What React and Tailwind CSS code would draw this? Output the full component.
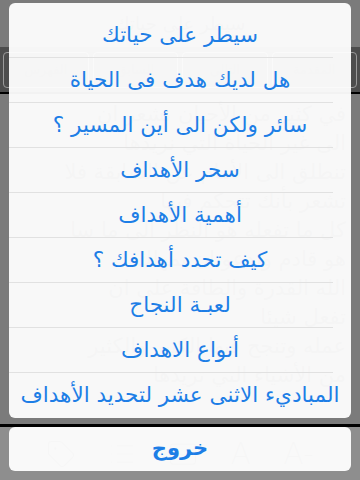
import React from "react";
import { Tag, List, Mail } from "lucide-react";

const items = [
  "سيطر على حياتك",
  "هل لديك هدف فى الحياة",
  "سائر ولكن الى أين المسير ؟",
  "سحر الأهداف",
  "أهمية الأهداف",
  "كيف تحدد أهدافك ؟",
  "لعبـة النجاح",
  "أنواع الاهداف",
  "المباديء الاثنى عشر لتحديد الأهداف",
];

const bodyLines = [
  "في كثير من الأحيان نشعر ان",
  "الى غير الحياة التي نريدها",
  "تنطلق الى الأمام عن السابقة فلا",
  "تشعر بأنك تتحكم فيها",
  "كل ما تفعله هو النظر الى ما سا",
  "هو قادم وتدعو ان يمهلك",
  "الله القدرة والطاقة على ان",
  "تفعل شيئا",
  "عمله وتنجح فيها الكثير والكثير",
  "من الأشياء التي تريدها",
];

export default function App() {
  return (
    <div
      className="relative w-[360px] h-[480px] overflow-hidden bg-[#7b7b7b]"
      style={{ fontFamily: '"DejaVu Sans", "Noto Sans", sans-serif' }}
    >
      {/* dimmed page underneath */}
      <div className="flex flex-col h-full">
        <div className="h-[47px] flex items-center justify-center text-[18px] text-[#3a3a3a]">
          سيطر على حياتك
        </div>
        <div className="h-[47px] bg-[#4d4d4d] border-b-2 border-black flex items-center px-[3px] gap-[4px]" dir="rtl">
          <div className="flex-1 h-[36px] rounded-[4px] border border-[#9a9a9a] flex items-center justify-center text-[13px] text-[#444]">المقدمة</div>
          <div className="flex-1 h-[36px] rounded-[4px] border border-[#9a9a9a] flex items-center justify-center text-[13px] text-[#444]">التالي</div>
          <div className="flex-1 h-[36px] rounded-[4px] border border-[#9a9a9a] flex items-center justify-center text-[13px] text-[#444]">السابق</div>
          <div className="flex-1 h-[36px] rounded-[4px] border border-[#9a9a9a] flex items-center justify-center text-[13px] text-[#444]">الفهرس</div>
        </div>
        <div className="flex-1 overflow-hidden pt-[6px] pr-[14px] text-right text-[21px] leading-[29px] text-[#3c3c3c] whitespace-nowrap" dir="rtl">
          {bodyLines.map((l, i) => (
            <div key={i}>{l}</div>
          ))}
        </div>
        <div className="h-[56px] shrink-0 bg-[#8e8e8e] border-t-[3px] border-black flex items-center justify-around px-[30px] text-[#5a5a5a]">
          <Tag size={30} strokeWidth={1} />
          <List size={28} strokeWidth={1} />
          <Mail size={30} strokeWidth={1} />
          <span className="text-[30px] font-light">A</span>
          <span className="text-[30px] font-light">A-</span>
        </div>
      </div>

      {/* action sheet overlay */}
      <div className="absolute inset-0 flex flex-col px-[9px] pt-[3px]">
        <div className="rounded-[6px] bg-white/[0.95] pt-[10px] flex flex-col overflow-hidden h-[415px]">
          {items.map((t, i) => (
            <React.Fragment key={i}>
              {i > 0 && <div className="h-px bg-[#e1e1e1] mr-[18px]" />}
              <div className="h-[44px] shrink-0 flex items-center justify-center text-[21.5px] text-[#1d7ee6] whitespace-nowrap" dir="rtl">
                {t}
              </div>
            </React.Fragment>
          ))}
        </div>
        <div className="mt-[9px] h-[44px] rounded-[6px] bg-white/[0.95] flex items-center justify-center text-[21px] font-bold text-[#1d7ee6]" dir="rtl">
          خروج
        </div>
      </div>
    </div>
  );
}
